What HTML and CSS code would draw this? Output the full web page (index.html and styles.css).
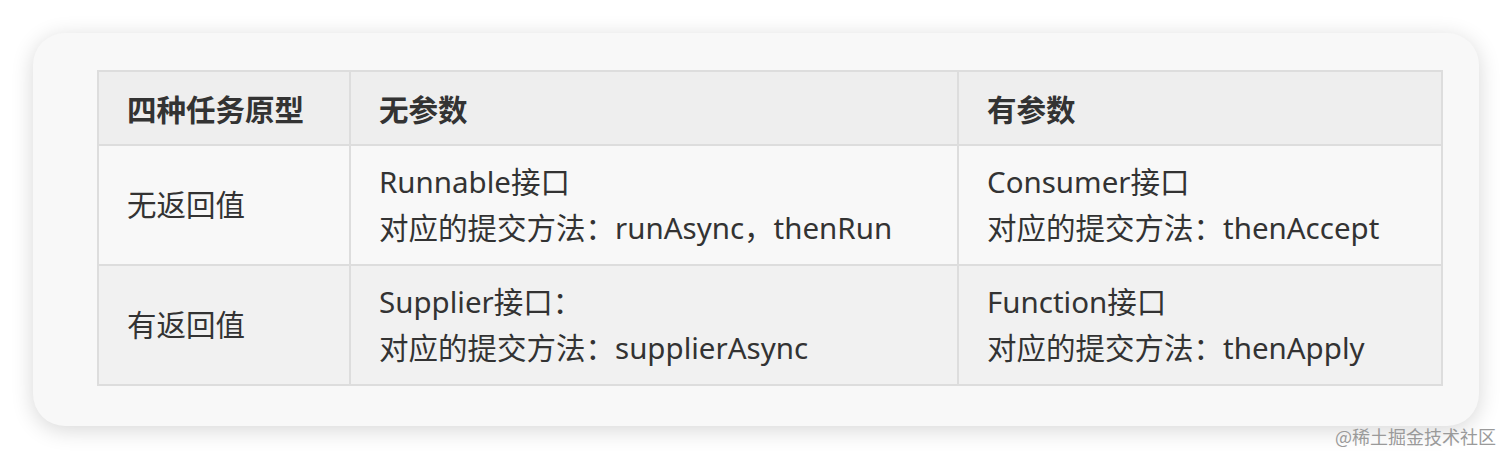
FILE: index.html
```html
<!DOCTYPE html>
<html lang="zh">
<head>
<meta charset="utf-8">
<link rel="stylesheet" href="styles.css">
</head>
<body>
<div class="page">
  <div class="card">
    <table class="grid">
      <colgroup>
        <col class="c1"><col class="c2"><col class="c3">
      </colgroup>
      <thead>
        <tr class="head">
          <th>四种任务原型</th>
          <th>无参数</th>
          <th>有参数</th>
        </tr>
      </thead>
      <tbody>
        <tr class="r1">
          <td>无返回值</td>
          <td>Runnable接口<br>对应的提交方法：runAsync，thenRun</td>
          <td>Consumer接口<br>对应的提交方法：thenAccept</td>
        </tr>
        <tr class="r2">
          <td>有返回值</td>
          <td>Supplier接口：<br>对应的提交方法：supplierAsync</td>
          <td>Function接口<br>对应的提交方法：thenApply</td>
        </tr>
      </tbody>
    </table>
  </div>
  <div class="mark">@稀土掘金技术社区</div>
</div>
</body>
</html>
```
FILE: styles.css
```css
html, body {
  margin: 0;
  padding: 0;
  background: #ffffff;
}
.page {
  width: 1512px;
  height: 460px;
  position: relative;
  box-sizing: border-box;
  padding: 33px 33px 0 33px;
  font-family: "Noto Sans", "Noto Sans CJK SC", sans-serif;
}
.card {
  width: 1446px;
  height: 393px;
  box-sizing: border-box;
  background: #f8f8f8;
  border-radius: 32px;
  box-shadow: 0 4px 22px rgba(0,0,0,0.16);
  padding: 37px 0 0 64px;
}
.grid {
  border-collapse: collapse;
  table-layout: fixed;
  width: 1344px;
  color: #333;
  font-size: 29.5px;
}
.c1 { width: 252px; }
.c2 { width: 608px; }
.c3 { width: 484px; }
.grid th, .grid td {
  border: 2px solid #dddddd;
  text-align: left;
  padding: 0 0 0 28px;
  vertical-align: middle;
}
.grid th {
  height: 72px;
  font-weight: 700;
  background: #eeeeee;
  font-size: 29.5px;
}
.grid td {
  height: 118px;
  line-height: 46px;
}
.r1 td { background: #f8f8f8; }
.r2 td { background: #f1f1f1; }
.mark {
  position: absolute;
  right: 16px;
  top: 423px;
  font-size: 18px;
  color: #9a9a9a;
  font-family: "Noto Sans CJK SC", sans-serif;
}
```
